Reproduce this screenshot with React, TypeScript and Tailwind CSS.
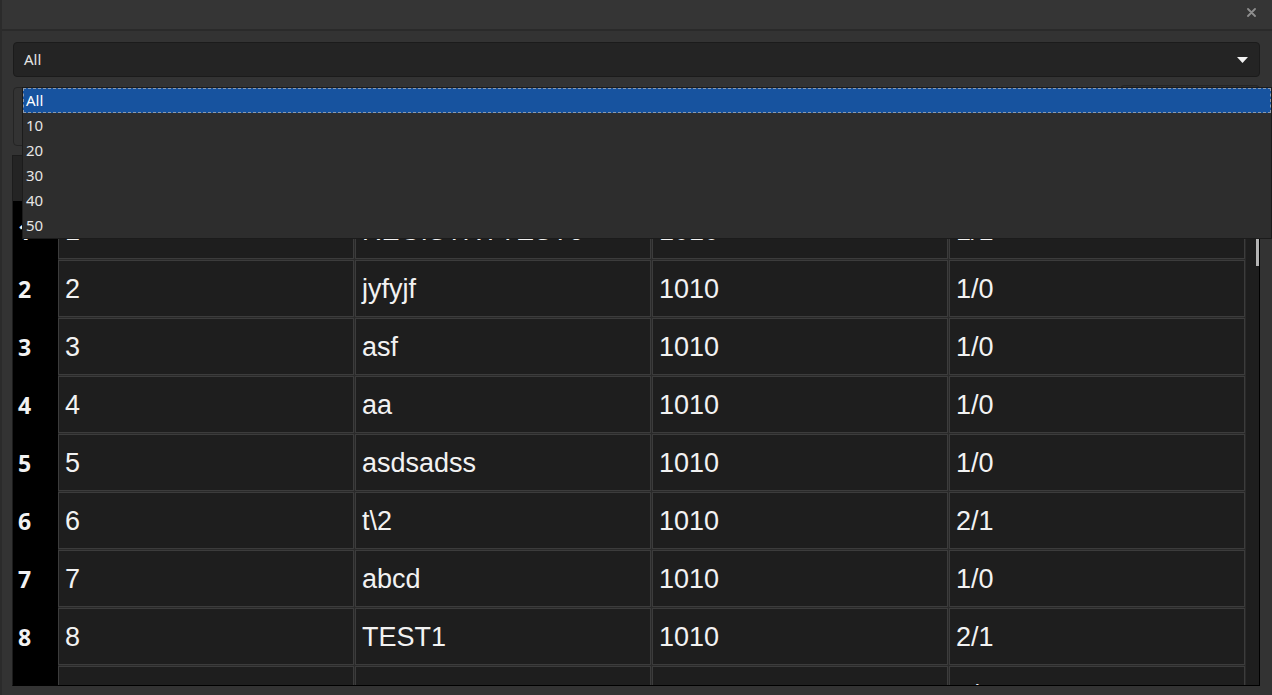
import React from 'react';

type Row = { n: number; id: string; name: string; code: string; ratio: string };

const rows: Row[] = [
  { n: 1, id: '1', name: 'REGISTRYTEST6', code: '1010', ratio: '1/1' },
  { n: 2, id: '2', name: 'jyfyjf', code: '1010', ratio: '1/0' },
  { n: 3, id: '3', name: 'asf', code: '1010', ratio: '1/0' },
  { n: 4, id: '4', name: 'aa', code: '1010', ratio: '1/0' },
  { n: 5, id: '5', name: 'asdsadss', code: '1010', ratio: '1/0' },
  { n: 6, id: '6', name: 't\\2', code: '1010', ratio: '2/1' },
  { n: 7, id: '7', name: 'abcd', code: '1010', ratio: '1/0' },
  { n: 8, id: '8', name: 'TEST1', code: '1010', ratio: '2/1' },
  { n: 9, id: '9', name: 'test9', code: '1010', ratio: '1/0' },
];

const options = ['All', '10', '20', '30', '40', '50'];

const Cell: React.FC<{ text: string }> = ({ text }) => (
  <div className="w-[296px] h-[57px] shrink-0 bg-[#1e1e1e] border border-[#3c3c3c] flex items-center pl-[6px] pt-[2px] text-[27px] text-[#f2f2f2] font-['Liberation_Sans',Arial,sans-serif] leading-none">
    {text}
  </div>
);

export default function App() {
  return (
    <div className="w-[1272px] h-[695px] bg-[#333333] relative overflow-hidden flex flex-col border-l-2 border-[#2b2b2b] font-['Noto_Sans',sans-serif]">
      {/* Title bar */}
      <div className="h-[31px] shrink-0 bg-[#353535] border-b-2 border-[#2a2a2a] flex items-start justify-end pr-[16px] pt-[8px]">
        <svg width="9" height="9" viewBox="0 0 9 9" className="text-[#8e8e8e]">
          <path d="M1 1L8 8M8 1L1 8" stroke="currentColor" strokeWidth="1.8" strokeLinecap="round" />
        </svg>
      </div>

      <div className="flex flex-col pl-[11px] pr-[12px]">
        {/* Page size combo */}
        <div className="mt-[11px] h-[35px] rounded-[4px] bg-[#242424] border border-[#1b1b1b] flex items-center justify-between pl-[10px] pr-[11px] text-[15px] text-[#e4e4e4]">
          <span>All</span>
          <svg width="11" height="6" viewBox="0 0 11 6">
            <path d="M0 0H11L5.5 6Z" fill="#f2f2f2" />
          </svg>
        </div>

        {/* Search row (covered by popup) */}
        <div className="mt-[10px] h-[59px] flex gap-[9px]">
          <div className="flex-1 rounded-[4px] border border-[#242424] bg-[#333333]" />
          <div className="w-[140px] -mt-[2px] rounded-[4px] border border-[#262626] bg-[#2e2e2e]" />
        </div>

        {/* Table */}
        <div className="mt-[9px] -ml-[1px] h-[531px] flex flex-col border-l border-t border-[#1c1c1c] border-r border-b border-r-black border-b-black overflow-hidden">
          <div className="h-[45px] shrink-0 flex bg-[#242424]">
            <div className="w-[45px] shrink-0 bg-[#242424]" />
            {['ID', 'Name', 'Code', 'Ratio'].map((h) => (
              <div key={h} className="w-[297px] shrink-0 flex items-center pl-[8px] text-[16px] text-[#dcdcdc]">
                {h}
              </div>
            ))}
          </div>
          <div className="flex-1 flex min-h-0 overflow-hidden">
            <div className="flex flex-col">
              <div className="h-px shrink-0 flex">
                <div className="w-[45px] bg-black" />
                <div className="w-[1187px] bg-[#2a2a2a]" />
              </div>
              {rows.map((r) => (
                <div key={r.n} className="h-[58px] shrink-0 flex">
                  <div className="w-[45px] shrink-0 bg-black flex items-center pl-[5px] pt-[1px] text-[23px] font-bold text-[#f2f2f2] leading-none">
                    {r.n}
                  </div>
                  <div className="flex gap-px bg-[#2a2a2a] pb-px">
                    <Cell text={r.id} />
                    <Cell text={r.name} />
                    <Cell text={r.code} />
                    <Cell text={r.ratio} />
                  </div>
                </div>
              ))}
            </div>
            <div className="w-px shrink-0 bg-[#2a2a2a]" />
            <div className="w-[14px] shrink-0 bg-[#1e1e1e] relative">
              <div className="absolute right-[1px] top-[1px] w-[3px] h-[64px] bg-[#b4b4b4]" />
            </div>
          </div>
        </div>
      </div>

      {/* Open combo popup */}
      <div className="absolute left-[20px] top-[87px] w-[1250px] h-[152px] bg-[#2d2d2d] border border-[#1b1b1b] flex flex-col text-[15px] text-[#e6e6e6]">
        {options.map((o, i) => (
          <div
            key={o}
            className={
              i === 0
                ? 'h-[25px] shrink-0 flex items-center pl-[2px] bg-[#17539f] border border-dashed border-[#8a99ad] text-white'
                : 'h-[25px] shrink-0 flex items-center pl-[3px]'
            }
          >
            {o}
          </div>
        ))}
      </div>
    </div>
  );
}
